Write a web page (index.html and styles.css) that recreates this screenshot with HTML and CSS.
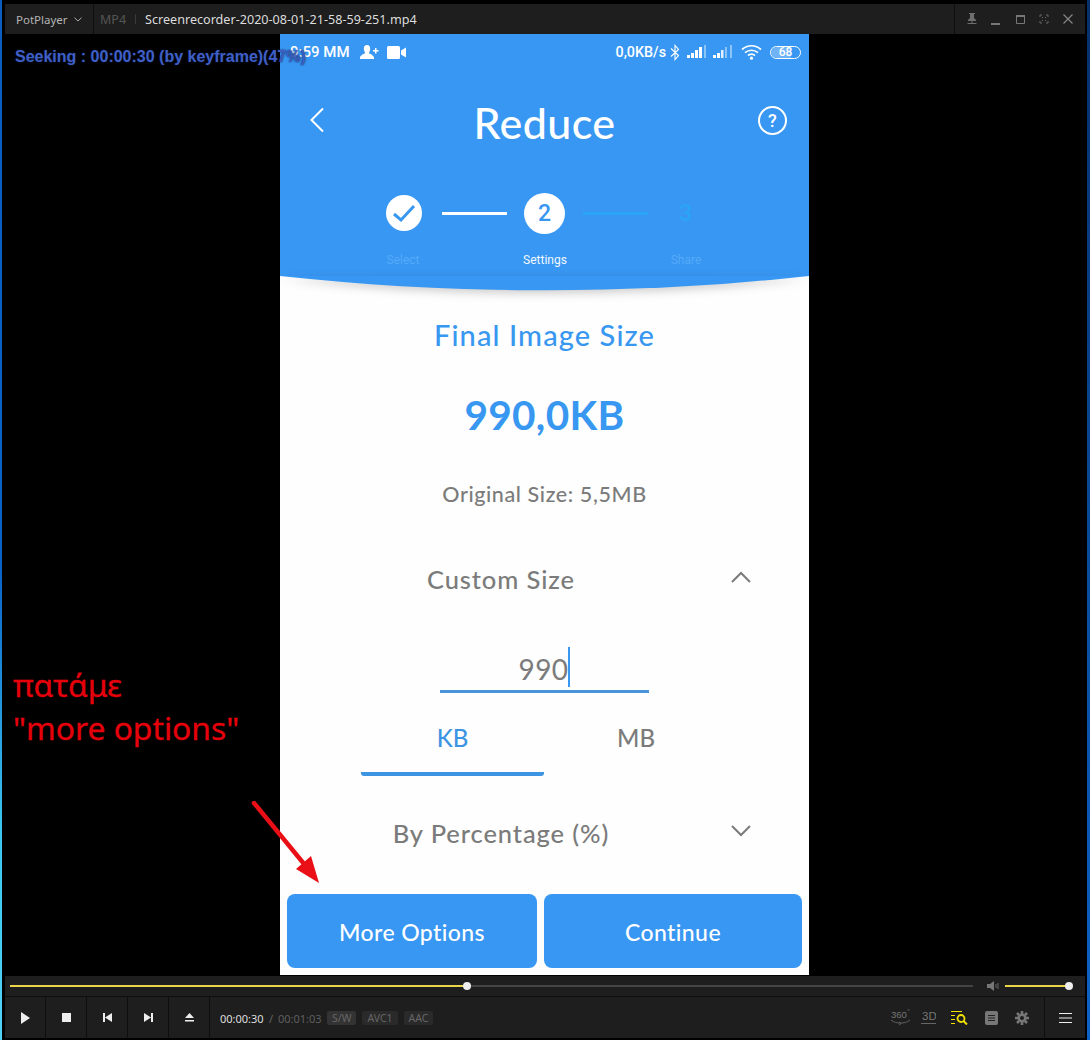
FILE: index.html
```html
<!DOCTYPE html>
<html lang="el">
<head>
<meta charset="utf-8">
<title>PotPlayer</title>
<link rel="stylesheet" href="styles.css">
</head>
<body>
<div class="desktop">
  <div class="strip strip-left"></div>
  <div class="window">
    <header class="titlebar">
      <div class="brand">PotPlayer
        <svg class="brand-caret" width="8" height="5" viewBox="0 0 8 5"><path d="M.5.7 4 4 7.500.7" fill="none" stroke="#aaa"/></svg>
      </div>
      <span class="format">MP4</span>
      <span class="format-sep"></span>
      <span class="filename">Screenrecorder-2020-08-01-21-58-59-251.mp4</span>
      <div class="winctl">
        <svg width="12" height="12" viewBox="0 0 12 12"><path d="M3 0h6v1H8v4l2 2v1H2V7l2-2V1H3zM5.500 8h1v2h4v1h-9v-1h4z" fill="#6e6e6e"/></svg>
        <svg width="12" height="12" viewBox="0 0 12 12"><path d="M1 10h9v2H1z" fill="#777"/></svg>
        <svg width="12" height="12" viewBox="0 0 12 12"><path d="M2.500 2.500h8v8h-8z" fill="none" stroke="#777"/><path d="M2 2h9v2H2z" fill="#777"/></svg>
        <svg width="12" height="12" viewBox="0 0 12 12"><path d="M2 4V2h2M8 2h2v2M10 8v2H8M4 10H2V8M4 4l1 1M8 4 7 5M8 8 7 7M4 8l1-1" fill="none" stroke="#666"/></svg>
        <svg width="12" height="12" viewBox="0 0 12 12"><path d="m1.500 1.500 9 9M10.500 1.500l-9 9" fill="none" stroke="#888" stroke-width="1.100"/></svg>
      </div>
    </header>

    <main class="stage">
      <section class="phone">
        <div class="app-head">
          <div class="status">
            <span class="status-time">9:59 ΜΜ</span>
            <svg class="ic-person" width="19" height="16" viewBox="0 0 19 16"><path d="M7 1c2 0 3.200 1.500 3.200 3.500S9 8 9 9c0 1 5 1.500 5 5v1H0v-1c0-3.500 5-4 5-5 0-1-1.200-2.500-1.200-4.500S5 1 7 1zM15 4h1.500v2H18.500v1.500h-2v2H15v-2h-2V6h2z" fill="#fff"/></svg>
            <svg class="ic-video" width="19" height="13" viewBox="0 0 19 13"><rect y="0" width="13" height="13" rx="1.500" fill="#fff"/><path d="m14 4.500 5-3v10l-5-3z" fill="#fff"/></svg>
            <span class="status-speed">0,0KB/s</span>
            <svg class="ic-bt" width="10" height="17" viewBox="0 0 10 17"><path d="M1 4.500 8.500 11.500 5 15.500V1.500L8.500 5.500 1 12.500" fill="none" stroke="#fff" stroke-width="1.100"/></svg>
            <svg class="ic-signal" width="20" height="14" viewBox="0 0 20 14"><path d="M0 10h3v3H0zM4 8h3v5H4zM8 5h3v8H8zM12 2h3v11h-3z" fill="#fff"/><path d="M17 0h2v13h-2z" fill="#8cc4f8"/></svg>
            <svg class="ic-signal ic-signal-2" width="20" height="14" viewBox="0 0 20 14"><path d="M0 10h3v3H0zM4 8h3v5H4z" fill="#fff"/><path d="M8 5h2.500v8H8z" fill="#e2f0fe"/><path d="M12 2h2v11h-2zM17 0h2v13h-2z" fill="#8cc4f8"/></svg>
            <svg class="ic-wifi" width="21" height="16" viewBox="0 0 21 16"><path d="M1 5.500C6.500.5 14.500.5 20 5.500M4 8.700c3.800-3.300 9.200-3.300 13 0M7 11.500c2.200-1.700 4.800-1.700 7 0" fill="none" stroke="#fff" stroke-width="1.700"/><circle cx="10.500" cy="14.200" r="1.600" fill="#fff"/></svg>
            <span class="battery"><span class="battery-fill"></span><span class="battery-text">68</span></span>
          </div>

          <div class="nav">
            <svg class="nav-back" width="16" height="26" viewBox="0 0 16 26"><path d="M14 1.500 2.500 13 14 24.500" fill="none" stroke="#fff" stroke-width="2"/></svg>
            <h1 class="nav-title">Reduce</h1>
            <span class="nav-help">?</span>
          </div>

          <div class="steps">
            <span class="step-done">
              <svg width="24" height="20" viewBox="0 0 24 20"><path d="M2 11l7 6L22 3" fill="none" stroke="#3897f0" stroke-width="3"/></svg>
            </span>
            <span class="step-line step-line-on"></span>
            <span class="step-now">2</span>
            <span class="step-line step-line-off"></span>
            <span class="step-next">3</span>
          </div>
          <div class="step-labels">
            <span class="step-label step-label-dim step-label-a">Select</span>
            <span class="step-label step-label-on">Settings</span>
            <span class="step-label step-label-dim step-label-c">Share</span>
          </div>
        </div>

        <svg class="curve" width="529" height="15" viewBox="0 0 529 15" preserveAspectRatio="none"><path d="M0 0h529C360 19 170 19 0 0z" fill="#3897f3"/></svg>

        <div class="app-body">
          <h2 class="final-label">Final Image Size</h2>
          <div class="final-value">990,0KB</div>
          <div class="original">Original Size: 5,5MB</div>

          <div class="accordion accordion-custom">
            <span class="accordion-title">Custom Size</span>
            <svg class="chev" width="20" height="12" viewBox="0 0 20 12"><path d="M1 11 10 2l9 9" fill="none" stroke="#7b7b7b" stroke-width="2"/></svg>
          </div>

          <div class="size-input"><span class="size-value">990</span><span class="size-caret"></span></div>

          <div class="tabs">
            <div class="tab tab-on">KB</div>
            <div class="tab">MB</div>
          </div>

          <div class="accordion accordion-percent">
            <span class="accordion-title">By Percentage (%)</span>
            <svg class="chev" width="20" height="12" viewBox="0 0 20 12"><path d="M1 1l9 9 9-9" fill="none" stroke="#7b7b7b" stroke-width="2"/></svg>
          </div>

          <div class="actions">
            <button class="action action-more">More Options</button>
            <button class="action action-go">Continue</button>
          </div>
        </div>
      </section>

      <div class="osd">Seeking : 00:00:30 (by keyframe)(47%)</div>
      <div class="note">πατάμε<br>"more options"</div>
      <svg class="arrow" width="80" height="92" viewBox="0 0 80 92"><path d="M3 2 58 69" stroke="#ea0f17" stroke-width="4.500" stroke-linecap="round" fill="none"/><path d="M68 82 45 68 60 55z" fill="#ea0f17"/></svg>
    </main>

    <div class="seek-row">
      <div class="seek-track"><span class="seek-fill"></span><span class="seek-knob"></span></div>
      <svg class="vol-ic" width="13" height="10" viewBox="0 0 13 10"><path d="M0 3h3l4-3v10L3 7H0z" fill="#777"/><path d="M9 3v4M11 2v6" stroke="#666"/></svg>
      <div class="vol-track"><span class="vol-knob"></span></div>
    </div>

    <footer class="controls">
      <button class="ctl"><svg width="10" height="12" viewBox="0 0 10 12"><path d="M1 0l9 6-9 6z" fill="#eee"/></svg></button>
      <button class="ctl"><svg width="9" height="9" viewBox="0 0 9 9"><path d="M0 0h9v9H0z" fill="#eee"/></svg></button>
      <button class="ctl"><svg width="9" height="9" viewBox="0 0 9 9"><path d="M0 0h2v9H0zM9 0v9L2 4.500z" fill="#eee"/></svg></button>
      <button class="ctl"><svg width="9" height="9" viewBox="0 0 9 9"><path d="M7 0h2v9H7zM0 0v9l7-4.500z" fill="#eee"/></svg></button>
      <button class="ctl"><svg width="9" height="9" viewBox="0 0 9 9"><path d="M4.500 0 9 5H0zM0 7h9v1.500H0z" fill="#eee"/></svg></button>
      <div class="times">
        <span class="time-now">00:00:30</span>
        <span class="time-sep">/</span>
        <span class="time-total">00:01:03</span>
        <span class="tag tag-sw">S/W</span>
        <span class="tag">AVC1</span>
        <span class="tag">AAC</span>
      </div>
      <div class="tools">
        <svg class="tool tool-a" width="22" height="17" viewBox="0 0 22 17"><text x="1" y="8.500" class="tool-360">360</text><path d="M17.500 1h2M1 11c3 2.500 6 3 9.500 3s6.500-.5 9.500-3M9 13l2 1.500L9 16" fill="none" stroke="#666" stroke-width=".9"/></svg>
        <svg class="tool tool-b" width="15" height="15" viewBox="0 0 15 15"><text x="1" y="10" class="tool-3d">3D</text><path d="M0 13.500h15" stroke="#666"/></svg>
        <svg class="tool tool-c" width="17" height="14" viewBox="0 0 17 14"><path d="M0 .5h11M0 4.500h4M0 8.500h4M0 12.500h4" stroke="#f2e000" stroke-width="1.200"/><circle cx="10" cy="7.500" r="3.500" fill="none" stroke="#f2e000" stroke-width="1.800"/><path d="m12.500 10 3.500 3.500" stroke="#f2e000" stroke-width="2"/></svg>
        <svg class="tool tool-d" width="13" height="14" viewBox="0 0 13 14"><rect width="13" height="14" rx="2" fill="#777"/><path d="M3 4.500h7M3 7h7M3 9.500h7" stroke="#222"/></svg>
        <svg class="tool tool-e" width="14" height="14" viewBox="0 0 14 14"><path d="M7 0v3M7 11v3M0 7h3M11 7h3M2 2l2 2M10 10l2 2M12 2l-2 2M4 10l-2 2" stroke="#777" stroke-width="2.600"/><circle cx="7" cy="7" r="3.300" fill="none" stroke="#777" stroke-width="2.600"/></svg>
      </div>
      <button class="ctl-menu"><svg width="13" height="10" viewBox="0 0 13 10"><path d="M0 .5h13M0 5h13M0 9.500h13" stroke="#eee"/></svg></button>
    </footer>
  </div>
  <div class="strip strip-right"></div>
</div>
</body>
</html>
```
FILE: styles.css
```css
* { box-sizing: border-box; }
html, body { margin: 0; padding: 0; background: #000; }
body { width: 1090px; height: 1040px; overflow: hidden; }
button { border: 0; padding: 0; margin: 0; background: none; font: inherit; }
h1, h2 { margin: 0; font-weight: inherit; }
svg { display: block; flex: none; }

.desktop { display: flex; height: 1040px; }
.strip { flex: none; }
.strip-left { width: 2px; background: linear-gradient(#0a5cc0 0, #0a62c8 55%, #3cc6ee 80%, #4fd2f4 100%); }
.strip-right { width: 3px; background: linear-gradient(#07306a 0, #0d62c8 100%); }
.window { flex: 1; display: flex; flex-direction: column; padding: 4px 2px 0 3px; font-family: "Noto Sans", sans-serif; }

/* title bar */
.titlebar { height: 30px; flex: none; display: flex; align-items: center; background: #1e1e1e; }
.brand { width: 89px; height: 30px; padding-left: 11px; display: flex; align-items: center; gap: 6px; font-size: 11.500px; color: #b4b4b4; border-right: 1px solid #0e0e0e; }
.brand-caret { margin-top: 1px; }
.format { margin-left: 6px; font-size: 12.500px; color: #555; }
.format-sep { width: 1px; height: 10px; margin: 0 9px; background: #3a3a3a; }
.filename { font-size: 12.600px; color: #dcdcdc; }
.winctl { margin-left: auto; width: 131px; height: 30px; padding-left: 11px; display: flex; align-items: center; gap: 12px; border-left: 1px solid #0e0e0e; }

/* video */
.stage { position: relative; height: 941px; flex: none; background: #000; padding-left: 275px; }
.phone { width: 529px; height: 941px; display: flex; flex-direction: column; background: #fdfefd; font-family: Lato, sans-serif; }
.app-head { height: 242px; flex: none; background: #3897f3; color: #fff; }

.status { height: 36px; display: flex; align-items: center; padding: 0 8px 0 10px; font-family: Roboto, sans-serif; font-weight: 500; }
.status-time { font-size: 15px; width: 70px; white-space: nowrap; }
.ic-video { margin-left: 8px; }
.status-speed { margin-left: auto; font-size: 14.300px; }
.ic-bt { margin-left: 4px; }
.ic-signal { margin-left: 7px; }
.ic-signal-2 { margin-left: 6px; }
.ic-wifi { margin-left: 8px; }
.battery { position: relative; margin-left: 8px; width: 31px; height: 13px; border: 1.500px solid #fff; border-radius: 7px; display: flex; align-items: center; justify-content: center; overflow: hidden; }
.battery-fill { position: absolute; left: 0; top: 0; bottom: 0; width: 68%; background: #6db3f6; }
.battery-text { position: relative; font-size: 12px; line-height: 10px; }

.nav { height: 120px; display: flex; align-items: flex-start; justify-content: space-between; padding: 0 22px 0 29px; position: relative; }
.nav-back { margin-top: 37px; }
.nav-title { font-size: 43px; line-height: 50px; font-weight: 500; letter-spacing: .4px; position: absolute; left: 0; right: 0; top: 28px; text-align: center; }
.nav-help { width: 29px; height: 29px; margin-top: 36px; border: 2px solid #fff; border-radius: 50%; display: flex; align-items: center; justify-content: center; font-family: Roboto, sans-serif; font-size: 18px; font-weight: 500; }

.steps { height: 44px; display: flex; align-items: center; margin-top: 1px; padding-left: 106px; }
.step-done { width: 36px; height: 36px; border-radius: 50%; background: #fff; display: flex; align-items: center; justify-content: center; }
.step-line { width: 65px; height: 3px; }
.step-line-on { background: #fff; margin: 0 17px 0 20px; }
.step-line-off { background: #2aa5f6; height: 3px; margin: 0 31px 0 18px; }
.step-now { width: 41px; height: 41px; border-radius: 50%; background: #fff; color: #3897f0; display: flex; align-items: center; justify-content: center; font-family: Roboto, sans-serif; font-size: 23px; font-weight: 500; }
.step-next { font-family: Roboto, sans-serif; font-size: 23px; font-weight: 500; color: #2aa5f6; }
.step-labels { position: relative; height: 20px; margin-top: 15px; font-family: Roboto, sans-serif; font-size: 12px; line-height: 20px; }
.step-label { position: absolute; top: 0; width: 80px; margin-left: -40px; text-align: center; }
.step-label-a { left: 123px; }
.step-label-on { left: 265px; color: #f2f8ff; }
.step-label-c { left: 406px; }
.step-label-dim { color: #54aaf8; }

.curve { position: relative; z-index: 1; filter: drop-shadow(0 3px 5px rgba(0, 0, 0, .2)); overflow: visible; }

.app-body { flex: 1; display: flex; flex-direction: column; align-items: center; color: #7b7b7b; }
.final-label { height: 86px; display: flex; align-items: center; font-size: 29px; font-weight: 500; letter-spacing: 1.100px; color: #3897f0; }
.final-value { height: 74px; display: flex; align-items: center; font-size: 40.500px; font-weight: 700; color: #3897f0; letter-spacing: .3px; }
.original { height: 86px; margin-bottom: 2px; display: flex; align-items: center; font-size: 21.500px; letter-spacing: .6px; font-weight: 500; }

.accordion { width: 529px; flex: none; position: relative; display: flex; align-items: center; justify-content: center; }
.accordion .chev { position: absolute; left: 451px; }
.accordion-custom { height: 82px; padding-bottom: 2px; }
.accordion-custom .chev { top: 32px; }
.accordion-title { font-size: 25.500px; font-weight: 500; letter-spacing: .9px; margin-right: 87px; }
.accordion-percent { height: 116px; padding-bottom: 2px; }
.accordion-percent .chev { top: 49px; }

.size-input { width: 209px; height: 72px; flex: none; border-bottom: 3px solid #4a94dc; display: flex; align-items: flex-end; justify-content: center; padding-bottom: 3px; position: relative; }
.size-value { font-size: 28px; line-height: 40px; letter-spacing: .4px; margin-bottom: -2px; }
.size-caret { width: 2px; height: 40px; background: #3897f0; }

.tabs { width: 367px; height: 83px; flex: none; display: grid; grid-template-columns: 183px 184px; }
.tab { padding-top: 26px; text-align: center; font-size: 24px; line-height: 38px; font-weight: 500; color: #7b7b7b; border-bottom: 4px solid transparent; }
.tab-on { color: #3d94e2; border-bottom-color: #3d94e2; border-radius: 0 0 3px 3px; }

.actions { width: 529px; height: 74px; flex: none; display: grid; grid-template-columns: 250px 258px; justify-content: center; column-gap: 7px; margin-top: 2px; }
.action { background: #3897f3; color: #fff; border-radius: 8px; padding-top: 2px; font-family: Lato, sans-serif; font-size: 23px; font-weight: 500; letter-spacing: .4px; }

/* overlays */
.osd { position: absolute; left: 10px; top: 12px; font-family: "Liberation Sans", sans-serif; font-size: 16px; font-weight: 700; line-height: 22px; color: #3f5fc6; text-shadow: 0 0 2px #0a1a40; white-space: nowrap; }
.note { position: absolute; left: 8px; top: 629px; font-family: "Noto Sans", Lato, sans-serif; font-size: 31.800px; font-weight: 400; line-height: 43px; color: #e6000c; -webkit-text-stroke: .3px #e6000c; white-space: nowrap; }
.arrow { position: absolute; left: 246px; top: 767px; }

/* transport */
.seek-row { height: 21px; flex: none; display: flex; align-items: center; padding: 0 12px 0 5px; background: #1e1e1e; margin-top: 1px; border-bottom: 1px solid #0e0e0e; }
.seek-track { position: relative; width: 963px; height: 2px; background: #444; }
.seek-fill { position: absolute; left: 0; top: 0; bottom: 0; width: 457px; background: #ead54a; }
.seek-knob { position: absolute; left: 453px; top: -3px; width: 8px; height: 8px; border-radius: 50%; background: #eee; }
.vol-ic { margin-left: 14px; }
.vol-track { position: relative; width: 64px; height: 2px; margin-left: 5px; background: #ead54a; }
.vol-knob { position: absolute; right: -4px; top: -3px; width: 8px; height: 8px; border-radius: 50%; background: #eee; }

.controls { height: 41px; flex: none; display: flex; align-items: center; background: #1e1e1e; }
.ctl { width: 41px; height: 41px; flex: none; display: flex; align-items: center; justify-content: center; border-right: 1px solid #0e0e0e; }
.times { margin-left: 10px; padding-top: 1px; display: flex; align-items: center; font-size: 11px; white-space: nowrap; }
.time-now { color: #dedede; width: 44px; }
.time-sep { color: #666; margin: 0 5px; width: 4px; }
.time-total { color: #5e5e5e; width: 44px; }
.tag { margin-left: 6px; padding: 0 5px; height: 14px; line-height: 14px; border-radius: 2px; background: #2a2a2a; color: #666; font-size: 10.500px; }
.tag-sw { margin-left: 5px; background: #333; }
.tools { margin-left: auto; display: flex; align-items: center; padding-right: 15px; }
.tool-b { margin-left: 8.500px; }
.tool-c { margin-left: 15px; }
.tool-d { margin-left: 17px; }
.tool-e { margin-left: 17.500px; }
.tool-360 { font: 9.500px "Liberation Sans", sans-serif; fill: #777; }
.tool-3d { font: 11.500px "Liberation Sans", sans-serif; fill: #777; }
.ctl-menu { width: 41px; height: 41px; flex: none; display: flex; align-items: center; justify-content: center; border-left: 1px solid #0e0e0e; }
```
